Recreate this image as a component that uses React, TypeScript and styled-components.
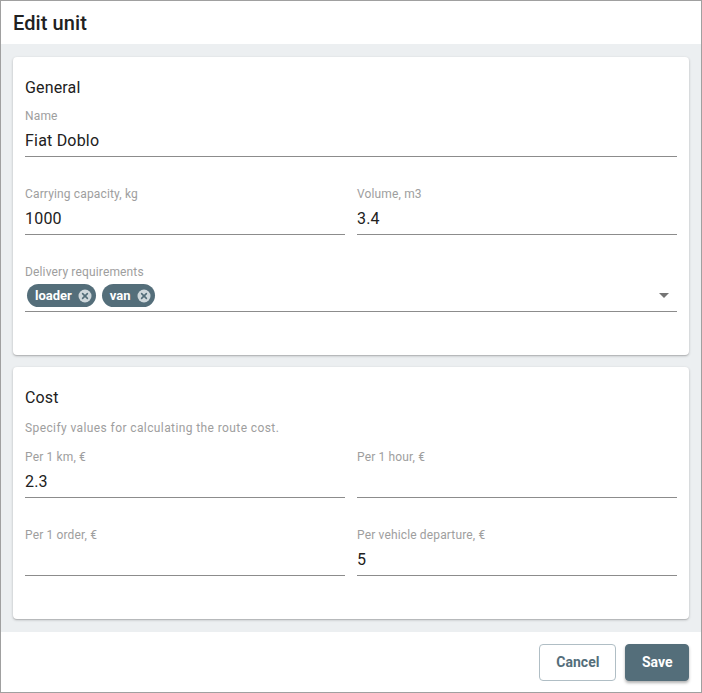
import styled, { createGlobalStyle } from "styled-components";

const GlobalStyle = createGlobalStyle`
  * { box-sizing: border-box; }
  body {
    margin: 0;
    font-family: Roboto, "Liberation Sans", sans-serif;
    color: #212121;
  }
`

const Dialog = styled.div`
  width: 702px;
  height: 693px;
  border: 1px solid #a0a0a0;
  display: flex;
  flex-direction: column;
  background-color: white;
`
const Header = styled.header`
  height: 43px;
  display: flex;
  align-items: center;
  padding: 0 12px;
  flex-shrink: 0;
`
const Title = styled.h1`
  margin: 0;
  font-size: 20px;
  font-weight: 500;
  letter-spacing: 0.1px;
`
const Body = styled.div`
  flex: 1;
  background-color: #eceff1;
  padding: 13px 12px 12px;
  display: flex;
  flex-direction: column;
  gap: 12px;
`
const Card = styled.section`
  background-color: white;
  border-radius: 4px;
  box-shadow: 0 1px 3px rgba(0, 0, 0, 0.2), 0 1px 1px rgba(0, 0, 0, 0.12);
  padding: 19px 12px 14px;
`
const CardTitle = styled.h2`
  margin: 0 0 8px;
  font-size: 16px;
  line-height: 24px;
  font-weight: 400;
  letter-spacing: 0.15px;
`
const Hint = styled.p`
  margin: 10px 0 13px;
  font-size: 12px;
  line-height: 16px;
  letter-spacing: 0.4px;
  color: #9e9e9e;
`
const Row = styled.div`
  display: grid;
  grid-template-columns: 1fr 1fr;
  column-gap: 12px;
`
const Field = styled.div`
  margin-bottom: 29px;
`
const Label = styled.div`
  font-size: 12px;
  line-height: 16px;
  letter-spacing: 0.15px;
  color: #9e9e9e;
`
const Input = styled.div`
  height: 33px;
  border-bottom: 1px solid #8c8c8c;
  font-size: 16px;
  letter-spacing: 0.2px;
  display: flex;
  align-items: center;
`
const Select = styled.div`
  height: 32px;
  border-bottom: 1px solid #8c8c8c;
  display: flex;
  align-items: center;
  gap: 6px;
  padding-left: 2px;
`
const Chip = styled.span`
  height: 23px;
  border-radius: 12px;
  background-color: #546e7a;
  color: white;
  font-size: 13px;
  font-weight: 700;
  display: inline-flex;
  align-items: center;
  gap: 6px;
  padding: 0 4px 0 8px;
`
const Arrow = styled.span`
  margin-left: auto;
  margin-right: 8px;
  width: 0;
  height: 0;
  border-left: 5px solid transparent;
  border-right: 5px solid transparent;
  border-top: 5px solid #757575;
`
const Footer = styled.footer`
  height: 60px;
  flex-shrink: 0;
  display: flex;
  align-items: center;
  justify-content: flex-end;
  gap: 9px;
  padding: 0 12px;
`
const Button = styled.button<{ $primary?: boolean }>`
  height: 37px;
  padding: 0 ${(p) => (p.$primary ? "15.5px" : "16px")};
  border-radius: 4px;
  font-family: inherit;
  font-size: 14px;
  font-weight: 700;
  cursor: pointer;
  border: 1px solid ${(p) => (p.$primary ? "#546e7a" : "#b0bec5")};
  background-color: ${(p) => (p.$primary ? "#546e7a" : "white")};
  color: ${(p) => (p.$primary ? "white" : "#546e7a")};
  box-shadow: ${(p) => (p.$primary ? "0 2px 3px rgba(0,0,0,0.3)" : "none")};
`

function ChipClose() {
  return (
    <svg width="14" height="14" viewBox="0 0 14 14">
      <circle cx="7" cy="7" r="6.5" fill="#cfd8dc" />
      <path d="M4.6 4.6 L9.4 9.4 M9.4 4.6 L4.6 9.4" stroke="#546e7a" strokeWidth="1.6" strokeLinecap="round" />
    </svg>
  )
}

function TextField({ label, value }: { label: string; value?: string }) {
  return (
    <Field>
      <Label>{label}</Label>
      <Input>{value}</Input>
    </Field>
  )
}

const requirements = ["loader", "van"]

export default function App() {
  return (
    <>
      <GlobalStyle />
      <Dialog>
        <Header>
          <Title>Edit unit</Title>
        </Header>
        <Body>
          <Card>
            <CardTitle>General</CardTitle>
            <TextField label="Name" value="Fiat Doblo" />
            <Row>
              <TextField label="Carrying capacity, kg" value="1000" />
              <TextField label="Volume, m3" value="3.4" />
            </Row>
            <Field>
              <Label>Delivery requirements</Label>
              <Select>
                {requirements.map((r) => (
                  <Chip key={r}>
                    {r}
                    <ChipClose />
                  </Chip>
                ))}
                <Arrow />
              </Select>
            </Field>
          </Card>
          <Card>
            <CardTitle>Cost</CardTitle>
            <Hint>Specify values for calculating the route cost.</Hint>
            <Row>
              <TextField label="Per 1 km, €" value="2.3" />
              <TextField label="Per 1 hour, €" />
            </Row>
            <Row>
              <TextField label="Per 1 order, €" />
              <TextField label="Per vehicle departure, €" value="5" />
            </Row>
          </Card>
        </Body>
        <Footer>
          <Button>Cancel</Button>
          <Button $primary>Save</Button>
        </Footer>
      </Dialog>
    </>
  )
}
